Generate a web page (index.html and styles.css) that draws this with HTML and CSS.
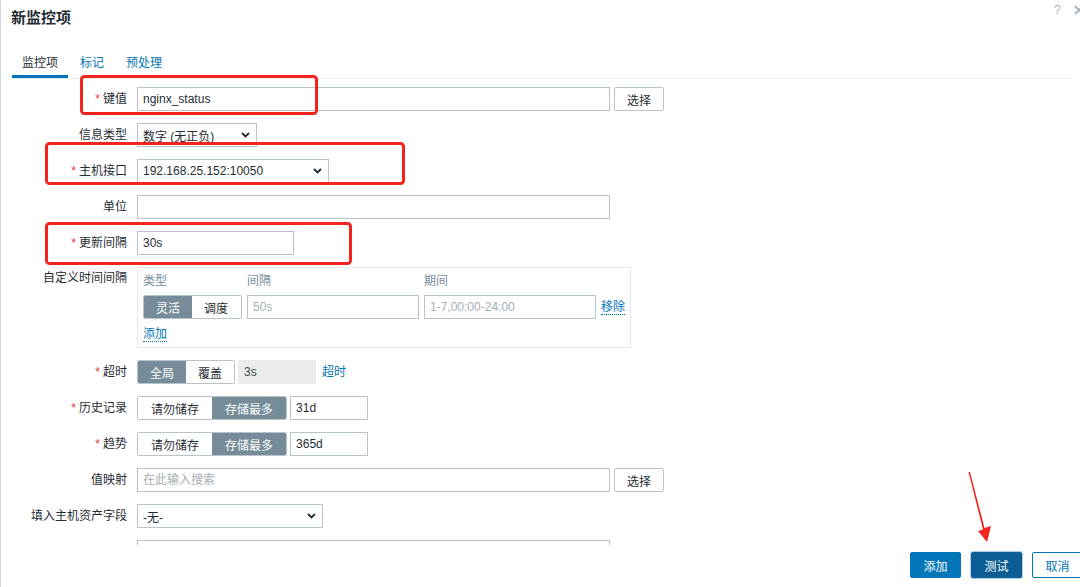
FILE: index.html
```html
<!DOCTYPE html>
<html lang="zh-CN">
<head>
    <meta charset="UTF-8">
    <meta name="viewport" content="width=device-width, initial-scale=1.0">
    <title>新监控项</title>
    <link rel="stylesheet" href="styles.css">
</head>
<body>
    <div class="dialog">
        <div class="dialog-head">
            <h4 class="dialog-title">新监控项</h4>
            <div class="head-actions">
                <span class="help">?</span>
                <svg class="close" width="10" height="10" viewBox="0 0 10 10">
                    <path d="M1 1 L9 9 M9 1 L1 9" stroke="#aab7be" stroke-width="2" fill="none"/>
                </svg>
            </div>
        </div>

        <ul class="tabs">
            <li class="tab active">监控项</li>
            <li class="tab">标记</li>
            <li class="tab">预处理</li>
        </ul>

        <div class="form-body">
            <div class="form-grid">
                <label class="form-label req">键值</label>
                <div class="field">
                    <input type="text" class="input input-long" value="nginx_status">
                    <button class="btn-alt">选择</button>
                </div>

                <label class="form-label">信息类型</label>
                <div class="field">
                    <div class="select select-type">
                        <span>数字 (无正负)</span>
                        <svg width="9" height="6" viewBox="0 0 9 6"><polyline points="1,1 4.5,4.5 8,1" fill="none" stroke="#1f2c33" stroke-width="1.8"/></svg>
                    </div>
                </div>

                <label class="form-label req">主机接口</label>
                <div class="field">
                    <div class="select select-iface">
                        <span>192.168.25.152:10050</span>
                        <svg width="9" height="6" viewBox="0 0 9 6"><polyline points="1,1 4.5,4.5 8,1" fill="none" stroke="#1f2c33" stroke-width="1.8"/></svg>
                    </div>
                </div>

                <label class="form-label">单位</label>
                <div class="field">
                    <input type="text" class="input input-long" value="">
                </div>

                <label class="form-label req">更新间隔</label>
                <div class="field">
                    <input type="text" class="input input-mid" value="30s">
                </div>

                <label class="form-label top">自定义时间间隔</label>
                <div class="interval-box">
                    <span class="box-head">类型</span>
                    <span class="box-head">间隔</span>
                    <span class="box-head">期间</span>
                    <span></span>

                    <div class="seg">
                        <span class="on">灵活</span>
                        <span>调度</span>
                    </div>
                    <input type="text" class="input input-box" placeholder="50s">
                    <input type="text" class="input input-box" placeholder="1-7,00:00-24:00">
                    <span class="link dotted">移除</span>

                    <div class="add-row"><span class="link dotted">添加</span></div>
                </div>

                <label class="form-label req">超时</label>
                <div class="field field-seg">
                    <div class="seg">
                        <span class="on">全局</span>
                        <span>覆盖</span>
                    </div>
                    <input type="text" class="input input-small input-off" value="3s" disabled>
                    <span class="link timeout-link">超时</span>
                </div>

                <label class="form-label req">历史记录</label>
                <div class="field field-seg">
                    <div class="seg seg-wide">
                        <span>请勿储存</span>
                        <span class="on">存储最多</span>
                    </div>
                    <input type="text" class="input input-small" value="31d">
                </div>

                <label class="form-label req">趋势</label>
                <div class="field field-seg">
                    <div class="seg seg-wide">
                        <span>请勿储存</span>
                        <span class="on">存储最多</span>
                    </div>
                    <input type="text" class="input input-small" value="365d">
                </div>

                <label class="form-label">值映射</label>
                <div class="field">
                    <input type="text" class="input input-long" placeholder="在此输入搜索">
                    <button class="btn-alt">选择</button>
                </div>

                <label class="form-label">填入主机资产字段</label>
                <div class="field">
                    <div class="select select-inv">
                        <span>-无-</span>
                        <svg width="9" height="6" viewBox="0 0 9 6"><polyline points="1,1 4.5,4.5 8,1" fill="none" stroke="#1f2c33" stroke-width="1.8"/></svg>
                    </div>
                </div>

                <label class="form-label"></label>
                <div class="field">
                    <input type="text" class="input input-long" value="">
                </div>
            </div>
        </div>

        <div class="dialog-foot">
            <button class="btn">添加</button>
            <button class="btn btn-focus">测试</button>
            <button class="btn btn-outline">取消</button>
        </div>
    </div>

    <!-- red annotation marks drawn over the screenshot -->
    <svg class="marks" width="1080" height="587" viewBox="0 0 1080 587">
        <rect x="81.5" y="76.5" width="235" height="37" rx="3" fill="none" stroke="#f3231d" stroke-width="3"/>
        <rect x="46.5" y="143.5" width="357" height="40" rx="3" fill="none" stroke="#f3231d" stroke-width="3"/>
        <rect x="46.5" y="223.5" width="304" height="40" rx="3" fill="none" stroke="#f3231d" stroke-width="3"/>
        <polygon points="968.5,472 970,472 984.5,528 991,526 987,542 978,531 983,529.5" fill="#f3231d"/>
    </svg>
</body>
</html>
```

FILE: styles.css
```css
* {
    box-sizing: border-box;
}

body {
    margin: 0;
    font-family: "Liberation Sans", "Noto Sans CJK SC", sans-serif;
    font-size: 12px;
    color: #1f2c33;
    background: #fff;
}

.dialog {
    width: 1080px;
    height: 587px;
    border-left: 1px solid #d3dade;
    display: flex;
    flex-direction: column;
    overflow: hidden;
}

.dialog-head {
    height: 50px;
    flex-shrink: 0;
    display: flex;
    justify-content: space-between;
    align-items: flex-start;
    padding-left: 10px;
}

.dialog-title {
    margin: 0;
    padding-top: 8px;
    font-size: 15px;
    line-height: 20px;
    font-weight: bold;
}

.head-actions {
    display: flex;
    align-items: center;
    gap: 13px;
    padding-top: 4px;
    margin-right: -4px;
    color: #aab7be;
}

.help {
    font-size: 13px;
    line-height: 12px;
}

.tabs {
    list-style: none;
    margin: 0 9px 0 11px;
    padding: 0;
    display: flex;
    gap: 2px;
    border-bottom: 1px solid #ebeef0;
    flex-shrink: 0;
}

.tab {
    padding: 6px 10px 5px;
    line-height: 14px;
    border-bottom: 3px solid transparent;
    color: #0275b8;
}

.tab.active {
    color: #1f2c33;
    border-bottom-color: #0275b8;
}

.form-body {
    flex: 1;
    min-height: 0;
    overflow: hidden;
    padding-top: 8px;
}

.form-grid {
    display: grid;
    grid-template-columns: 126px 1fr;
    column-gap: 10px;
    row-gap: 12px;
    align-items: center;
}

.form-label {
    text-align: right;
    line-height: 14px;
}

.form-label.req::before {
    content: "*";
    color: #e33734;
    margin-right: 3px;
}

.form-label.top {
    align-self: start;
    padding-top: 4px;
}

.field {
    display: flex;
    align-items: center;
    gap: 4px;
}

.field-seg {
    gap: 3px;
}

.input {
    height: 24px;
    border: 1px solid #b9c4ca;
    padding: 0 5px;
    font: inherit;
    color: #1f2c33;
    background: #fff;
    outline: none;
}

.input::placeholder {
    color: #a3afb6;
}

.input-long {
    width: 473px;
}

.input-mid {
    width: 157px;
}

.input-small {
    width: 78px;
}

.input-box {
    width: 172px;
}

.input-off {
    background: #ebebeb;
    border-color: #ebebeb;
    color: #3e4a50;
}

.btn-alt {
    height: 24px;
    width: 50px;
    border: 1px solid #b9c4ca;
    border-radius: 2px;
    background: #fff;
    color: #1f2c33;
    font: inherit;
    padding: 0;
}

.select {
    height: 24px;
    border: 1px solid #b9c4ca;
    display: flex;
    align-items: center;
    justify-content: space-between;
    padding: 0 6px 0 5px;
    background: #fff;
}

.select-type {
    width: 120px;
}

.select-iface {
    width: 192px;
}

.select-inv {
    width: 186px;
}

.interval-box {
    justify-self: start;
    border: 1px solid #e5eaec;
    padding: 4px 5px;
    display: grid;
    grid-template-columns: 99px 172px 172px auto;
    column-gap: 5px;
    row-gap: 5px;
    align-items: center;
}

.box-head {
    color: #768d99;
    line-height: 18px;
}

.add-row {
    grid-column: 1 / -1;
    line-height: 18px;
    margin-top: 1px;
}

.seg {
    display: flex;
    height: 24px;
    border: 1px solid #b9c4ca;
    border-radius: 2px;
    overflow: hidden;
}

.seg span {
    display: flex;
    align-items: center;
    justify-content: center;
    padding: 0 12px;
    background: #fff;
}

.seg-wide span {
    padding: 0 13px;
}

.seg .on {
    background: #768d99;
    color: #fff;
}

.link {
    color: #0275b8;
    line-height: 14px;
}

.dotted {
    border-bottom: 1px dotted #0275b8;
}

.timeout-link {
    margin-left: 3px;
}

.dialog-foot {
    height: 42px;
    flex-shrink: 0;
    display: flex;
    justify-content: flex-end;
    align-items: flex-start;
    gap: 10px;
    padding-top: 7px;
    margin-right: -3px;
}

.btn {
    width: 51px;
    height: 26px;
    border: 1px solid #0275b8;
    border-radius: 2px;
    background: #0275b8;
    color: #fff;
    font: inherit;
    padding: 0;
}

.btn-focus {
    background: #0b5d94;
    border-color: #0b5d94;
    box-shadow: 0 0 0 1px #a9cde9;
}

.btn-outline {
    background: #fff;
    color: #0275b8;
}

.marks {
    position: absolute;
    left: 0;
    top: 0;
    pointer-events: none;
}
```
